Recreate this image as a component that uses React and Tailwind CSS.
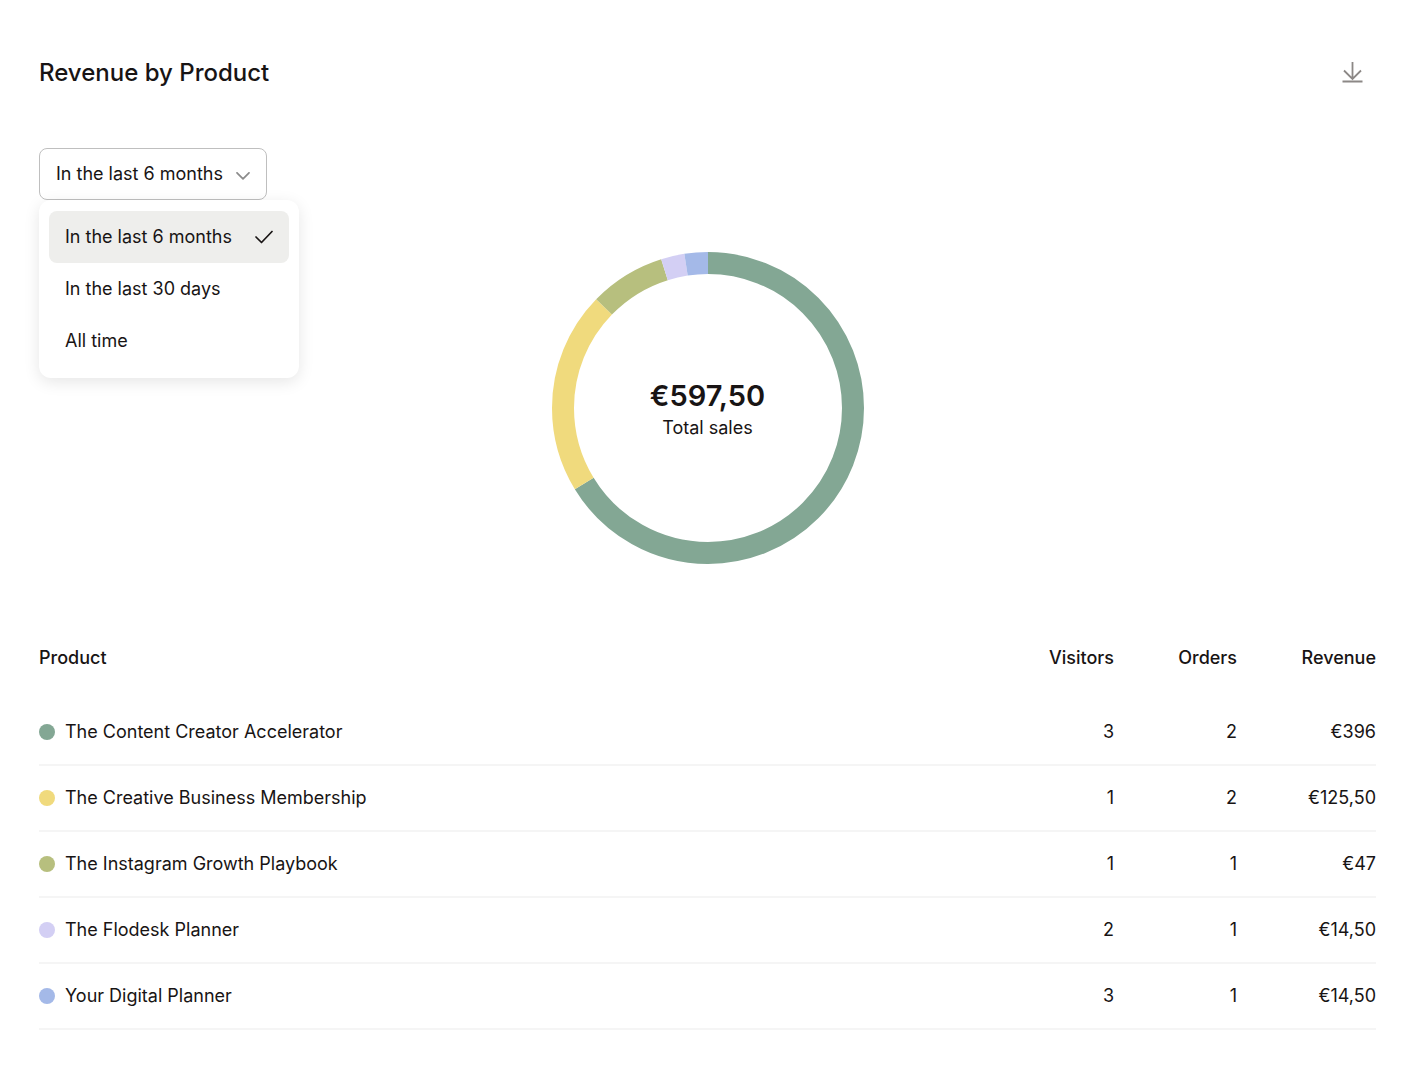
import { useState } from 'react';

const periods = ['In the last 6 months', 'In the last 30 days', 'All time'];

const products = [
    { name: 'The Content Creator Accelerator', visitors: 3, orders: 2, revenue: 396, dot: 'bg-[#83a794]', stroke: 'stroke-[#83a794]' },
    { name: 'The Creative Business Membership', visitors: 1, orders: 2, revenue: 125.5, dot: 'bg-[#f0da7d]', stroke: 'stroke-[#f0da7d]' },
    { name: 'The Instagram Growth Playbook', visitors: 1, orders: 1, revenue: 47, dot: 'bg-[#b7bf7e]', stroke: 'stroke-[#b7bf7e]' },
    { name: 'The Flodesk Planner', visitors: 2, orders: 1, revenue: 14.5, dot: 'bg-[#d3cff4]', stroke: 'stroke-[#d3cff4]' },
    { name: 'Your Digital Planner', visitors: 3, orders: 1, revenue: 14.5, dot: 'bg-[#a4b9e8]', stroke: 'stroke-[#a4b9e8]' },
];

const total = products.reduce((sum, p) => sum + p.revenue, 0);

const formatEuro = (value) => `€${Number.isInteger(value) ? value : value.toFixed(2).replace('.', ',')}`;

const PeriodSelect = () => {
    const [period, setPeriod] = useState(periods[0]);
    const [open, setOpen] = useState(true);

    const toggle = (e) => {
        // keep the native list closed, the styled menu replaces it
        e.preventDefault();
        setOpen(!open);
    };

    return (
        <div className="relative w-fit">
            <select
                aria-label="Period"
                value={period}
                onMouseDown={toggle}
                onChange={(e) => setPeriod(e.target.value)}
                className="block h-[52px] w-[228px] cursor-pointer appearance-none rounded-lg border border-[#bfbfbf] bg-white pl-4 pr-10 text-lg"
            >
                {periods.map((p) => <option key={p}>{p}</option>)}
            </select>
            <svg className="pointer-events-none absolute right-4 top-6 h-2 w-4" viewBox="0 0 16 8" fill="none" stroke="#8c8c8c" strokeWidth="1.7" strokeLinecap="round" strokeLinejoin="round">
                <path d="M2 0.8l6 6 6-6" />
            </svg>

            {open && (
                <ul role="listbox" aria-label="Period" className="absolute left-0 top-full w-[260px] rounded-xl bg-white px-[10px] py-[11px] shadow-[0_4px_16px_rgba(0,0,0,0.10)]">
                    {periods.map((p) => (
                        <li key={p} role="option" aria-selected={p === period}>
                            <button
                                type="button"
                                onClick={() => { setPeriod(p); setOpen(false); }}
                                className={`flex h-[52px] w-full items-center justify-between rounded-lg px-4 text-left text-lg ${p === period ? 'bg-[#eeeeec]' : 'bg-white'}`}
                            >
                                <span>{p}</span>
                                {p === period && (
                                    <svg className="h-[14px] w-[18px]" viewBox="0 0 18 14" fill="none" stroke="#181414" strokeWidth="1.7" strokeLinecap="round" strokeLinejoin="round">
                                        <path d="M1 7l5.5 5.5L17 1.5" />
                                    </svg>
                                )}
                            </button>
                        </li>
                    ))}
                </ul>
            )}
        </div>
    );
};

const Donut = () => {
    let start = 0;

    return (
        <div className="relative size-[312px]">
            <svg className="size-full -rotate-90" viewBox="0 0 312 312" fill="none" aria-hidden="true">
                {products.map((p) => {
                    const share = (p.revenue / total) * 100;
                    const offset = -start;
                    start += share;
                    return (
                        <circle
                            key={p.name}
                            className={p.stroke}
                            cx="156"
                            cy="156"
                            r="145"
                            strokeWidth="22"
                            pathLength="100"
                            strokeDasharray={`${share} ${100 - share}`}
                            strokeDashoffset={offset}
                        />
                    );
                })}
            </svg>
            <div className="absolute inset-0 flex flex-col items-center justify-center">
                <p className="text-[29px] leading-10 font-semibold">{formatEuro(total)}</p>
                <p className="text-lg leading-6">Total sales</p>
            </div>
        </div>
    );
};

const ProductTable = () => (
    <table className="w-full text-lg">
        <thead>
            <tr className="h-[55px] text-right align-top">
                <th className="text-left font-medium">Product</th>
                <th className="w-[120px] font-medium">Visitors</th>
                <th className="w-[123px] font-medium">Orders</th>
                <th className="w-[139px] font-medium">Revenue</th>
            </tr>
        </thead>
        <tbody>
            {products.map((p) => (
                <tr key={p.name} className="h-[66px] border-b-2 border-[#f5f5f5] text-right">
                    <td className="text-left">
                        <span className="flex items-center gap-[10px]">
                            <span className={`size-4 rounded-full ${p.dot}`} />
                            {p.name}
                        </span>
                    </td>
                    <td>{p.visitors}</td>
                    <td>{p.orders}</td>
                    <td>{formatEuro(p.revenue)}</td>
                </tr>
            ))}
        </tbody>
    </table>
);

export default function App() {
    return (
        <main className="bg-white pb-14 pl-[39px] pr-12 pt-[57px] font-[Inter,sans-serif] text-[#181414]">
            <header className="flex items-center justify-between">
                <h1 className="text-2xl font-medium">Revenue by Product</h1>
                <button type="button" aria-label="Download" className="mr-3">
                    <svg className="size-6" viewBox="0 0 24 24" fill="none" stroke="#8c8886" strokeWidth="1.8">
                        <path d="M12.5 1v17M4 9.500l8.500 8.500L21 9.500M2.500 20.500h20" />
                    </svg>
                </button>
            </header>

            <section className="mt-[59px]">
                <PeriodSelect />
                <div className="mt-[52px] flex justify-center">
                    <Donut />
                </div>
            </section>

            <section className="mt-20">
                <ProductTable />
            </section>
        </main>
    );
}
